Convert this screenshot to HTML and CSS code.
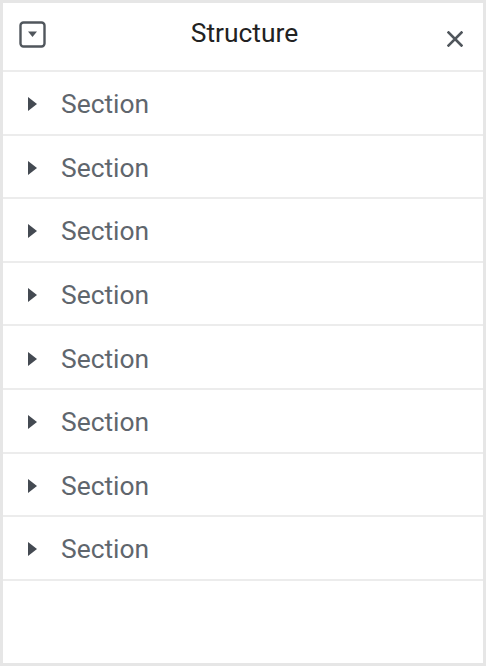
FILE: index.html
```html
<!DOCTYPE html>
<html lang="en">
<head>
  <meta charset="UTF-8" />
  <title>Structure</title>
  <link rel="stylesheet" href="styles.css">
</head>
<body>
  <div class="navigator">
    <div class="nav-header">
      <button class="toggle-btn" title="Collapse">
        <svg width="27" height="27" viewBox="0 0 27 27">
          <rect x="1.5" y="1.5" width="24" height="24" rx="3" fill="none" stroke="#50565c" stroke-width="2.4"/>
          <path d="M9 10.5 L18 10.5 L13.5 16 Z" fill="#50565c"/>
        </svg>
      </button>
      <div class="nav-title">Structure</div>
      <button class="close-btn" title="Close">
        <svg width="16" height="16" viewBox="0 0 16 16">
          <path d="M1.5 1.5 L14.5 14.5 M14.5 1.5 L1.5 14.5" stroke="#50565c" stroke-width="2.6" stroke-linecap="square"/>
        </svg>
      </button>
    </div>
    <ul class="nav-list">
      <li class="nav-item"><span class="caret"></span>Section</li>
      <li class="nav-item"><span class="caret"></span>Section</li>
      <li class="nav-item"><span class="caret"></span>Section</li>
      <li class="nav-item"><span class="caret"></span>Section</li>
      <li class="nav-item"><span class="caret"></span>Section</li>
      <li class="nav-item"><span class="caret"></span>Section</li>
      <li class="nav-item"><span class="caret"></span>Section</li>
      <li class="nav-item"><span class="caret"></span>Section</li>
    </ul>
  </div>
</body>
</html>
```

FILE: styles.css
```css
* { margin: 0; padding: 0; box-sizing: border-box; font-family: Roboto, 'Liberation Sans', sans-serif; }
html, body {
  width: 486px;
  height: 666px;
  overflow: hidden;
}
body {
  background: #e6e6e6;
  padding: 3px;
}
.navigator {
  background: #fff;
  height: 660px;
  display: flex;
  flex-direction: column;
}
.nav-header {
  height: 69px;
  border-bottom: 2px solid #ececec;
  display: flex;
  align-items: center;
  padding: 0 20px 0 16px;
}
.toggle-btn,
.close-btn {
  border: none;
  background: none;
  display: flex;
  align-items: center;
  justify-content: center;
}
.toggle-btn {
  margin-top: -4px;
}
.close-btn {
  margin-top: 5px;
}
.nav-title {
  flex: 1;
  text-align: center;
  font-size: 26.4px;
  color: #222;
  margin-top: -8px;
  padding-right: 4px;
}
.nav-list {
  list-style: none;
}
.nav-item {
  height: 63.6px;
  border-bottom: 2px solid #ececec;
  display: flex;
  align-items: center;
  padding: 3px 0 0 25px;
  font-size: 26.4px;
  color: #5f666d;
}
.caret {
  width: 0;
  height: 0;
  border-top: 7px solid transparent;
  border-bottom: 7px solid transparent;
  border-left: 9px solid #444a52;
  margin-right: 24px;
}
```
